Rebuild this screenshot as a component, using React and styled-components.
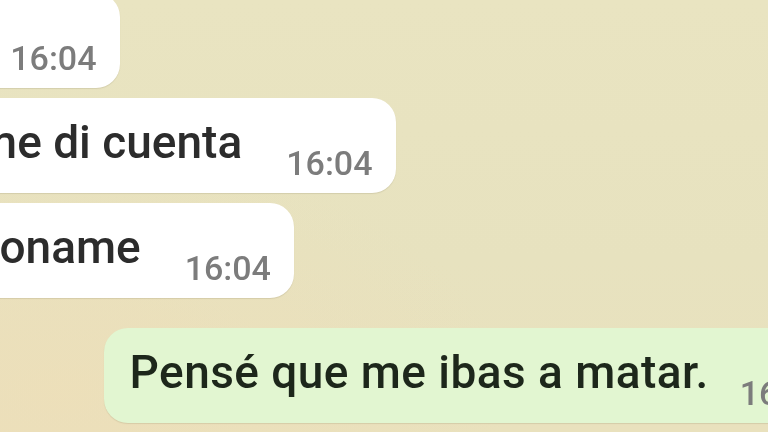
import React from "react";
import styled, { createGlobalStyle } from "styled-components";

const Global = createGlobalStyle`
  html, body { margin: 0; padding: 0; }
  body {
    width: 768px;
    height: 432px;
    overflow: hidden;
    background: #e8e2c1;
    font-family: Roboto, "Noto Sans", "Liberation Sans", sans-serif;
  }
`;

const Screen = styled.div`
  width: 768px;
  height: 432px;
  overflow: hidden;
  background:
    radial-gradient(ellipse at 8% 92%, rgba(238, 222, 184, 0.7), transparent 45%),
    linear-gradient(180deg, #e9e4c1 0%, #e7e2bf 60%, #e9e1bd 100%);
  filter: blur(0.7px);
`;

const Chat = styled.div`
  display: flex;
  flex-direction: column;
  width: 1011px;
  margin-left: -122px;
  margin-top: -7px;
`;

const Bubble = styled.div`
  display: flex;
  align-items: flex-end;
  align-self: ${(p) => (p.$out ? "flex-end" : "flex-start")};
  margin-top: ${(p) => p.$space || 0}px;
  padding: 17px 23px 10px 26px;
  border-radius: 24px;
  background: ${(p) => (p.$out ? "#e2f6d1" : "#ffffff")};
  box-shadow: 0 1px 1px rgba(120, 110, 80, 0.18);
`;

const Text = styled.span`
  font-size: 46px;
  font-weight: 500;
  line-height: 54px;
  margin-bottom: 14px;
  letter-spacing: ${(p) => (p.$out ? "0.45px" : "0")};
  color: ${(p) => (p.$out ? "#1d271b" : "#2c2c2c")};
  white-space: nowrap;
`;

const Meta = styled.span`
  display: flex;
  align-items: center;
  gap: 6px;
  margin-left: ${(p) => (p.$out ? 31 : 44)}px;
  font-size: 34px;
  font-weight: 500;
  line-height: 40px;
  color: #7c7c7c;
  white-space: nowrap;
`;

const Ticks = () => (
  <svg width="34" height="22" viewBox="0 0 34 22" fill="none" stroke="#53bdeb" strokeWidth="3" strokeLinecap="round" strokeLinejoin="round">
    <path d="M2 12l6 6L20 4" />
    <path d="M14 16l2 2L30 4" />
  </svg>
);

const messages = [
  { text: "Sí?", time: "16:04" },
  { text: "Ya, me di cuenta", time: "16:04", space: 10 },
  { text: "Perdoname", time: "16:04", space: 10 },
  { text: "Pensé que me ibas a matar.", time: "16:04", space: 30, out: true },
];

export default function App() {
  return (
    <>
      <Global />
      <Screen>
        <Chat>
          {messages.map((m, i) => (
            <Bubble key={i} $out={m.out} $space={m.space}>
              <Text $out={m.out}>{m.text}</Text>
              <Meta $out={m.out}>
                {m.time}
                {m.out && <Ticks />}
              </Meta>
            </Bubble>
          ))}
        </Chat>
      </Screen>
    </>
  );
}
